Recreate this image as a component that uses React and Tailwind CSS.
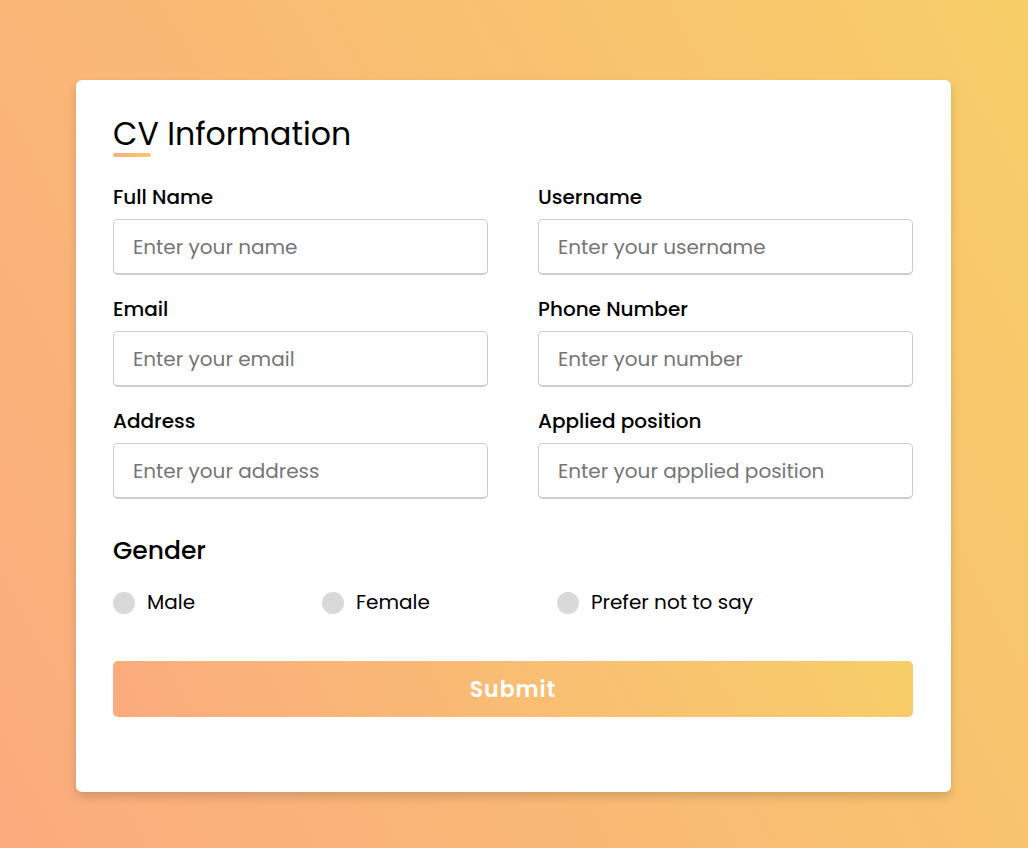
import React, { useState } from 'react';

const fields = [
  { label: 'Full Name', placeholder: 'Enter your name' },
  { label: 'Username', placeholder: 'Enter your username' },
  { label: 'Email', placeholder: 'Enter your email' },
  { label: 'Phone Number', placeholder: 'Enter your number' },
  { label: 'Address', placeholder: 'Enter your address' },
  { label: 'Applied position', placeholder: 'Enter your applied position' },
];

const genders = ['Male', 'Female', 'Prefer not to say'];

const App = () => {
  const [gender, setGender] = useState(null);

  return (
    <div className="min-h-screen w-full pt-[80px] pb-[56px] pr-[1px] flex justify-center bg-[linear-gradient(62deg,#FBAB7E_0%,#F7CE68_100%)] font-['Poppins','Noto_Sans',sans-serif] text-black">
      <div className="w-[875px] bg-white rounded-[6px] pl-[37px] pr-[38px] pt-[30px] pb-[75px] shadow-[0_5px_10px_rgba(0,0,0,0.15)]">
        {/* Title */}
        <div className="relative h-[48px] flex items-center">
          <h1 className="text-[31.6px] leading-[48px] font-normal">CV Information</h1>
          <span className="absolute left-0 bottom-[1px] h-[4px] w-[38px] rounded-[5px] bg-[linear-gradient(135deg,#FBAB7E,#F7CE68)]"></span>
        </div>

        {/* Inputs */}
        <div className="mt-[27px] grid grid-cols-2 gap-x-[50px] gap-y-[22px]">
          {fields.map((f) => (
            <div key={f.label} className="flex flex-col">
              <label className="text-[20px] leading-[24px] font-medium">{f.label}</label>
              <input
                type="text"
                placeholder={f.placeholder}
                className="mt-[10px] h-[56px] w-full rounded-[5px] border border-[#ccc] border-b-2 pl-[19px] text-[20px] outline-none placeholder:text-[#757575]"
              />
            </div>
          ))}
        </div>

        {/* Gender */}
        <div className="mt-[34px]">
          <h2 className="text-[25px] leading-[36px] font-medium">Gender</h2>
          <div className="mt-[20px] w-4/5 flex justify-between">
            {genders.map((g) => (
              <label key={g} className="flex items-center cursor-pointer" onClick={() => setGender(g)}>
                <span
                  className={
                    gender === g
                      ? 'h-[22px] w-[22px] rounded-full bg-[#d9d9d9] border-[5px] border-[#F7CE68]'
                      : 'h-[22px] w-[22px] rounded-full bg-[#d9d9d9]'
                  }
                ></span>
                <span className="ml-[12px] text-[20px] leading-[27px]">{g}</span>
              </label>
            ))}
          </div>
        </div>

        {/* Submit */}
        <button className="mt-[45px] h-[56px] w-full rounded-[5px] bg-[linear-gradient(62deg,#FBAB7E_0%,#F7CE68_100%)] text-white text-[22px] font-semibold tracking-[1px]">
          Submit
        </button>
      </div>
    </div>
  );
};

export default App;
